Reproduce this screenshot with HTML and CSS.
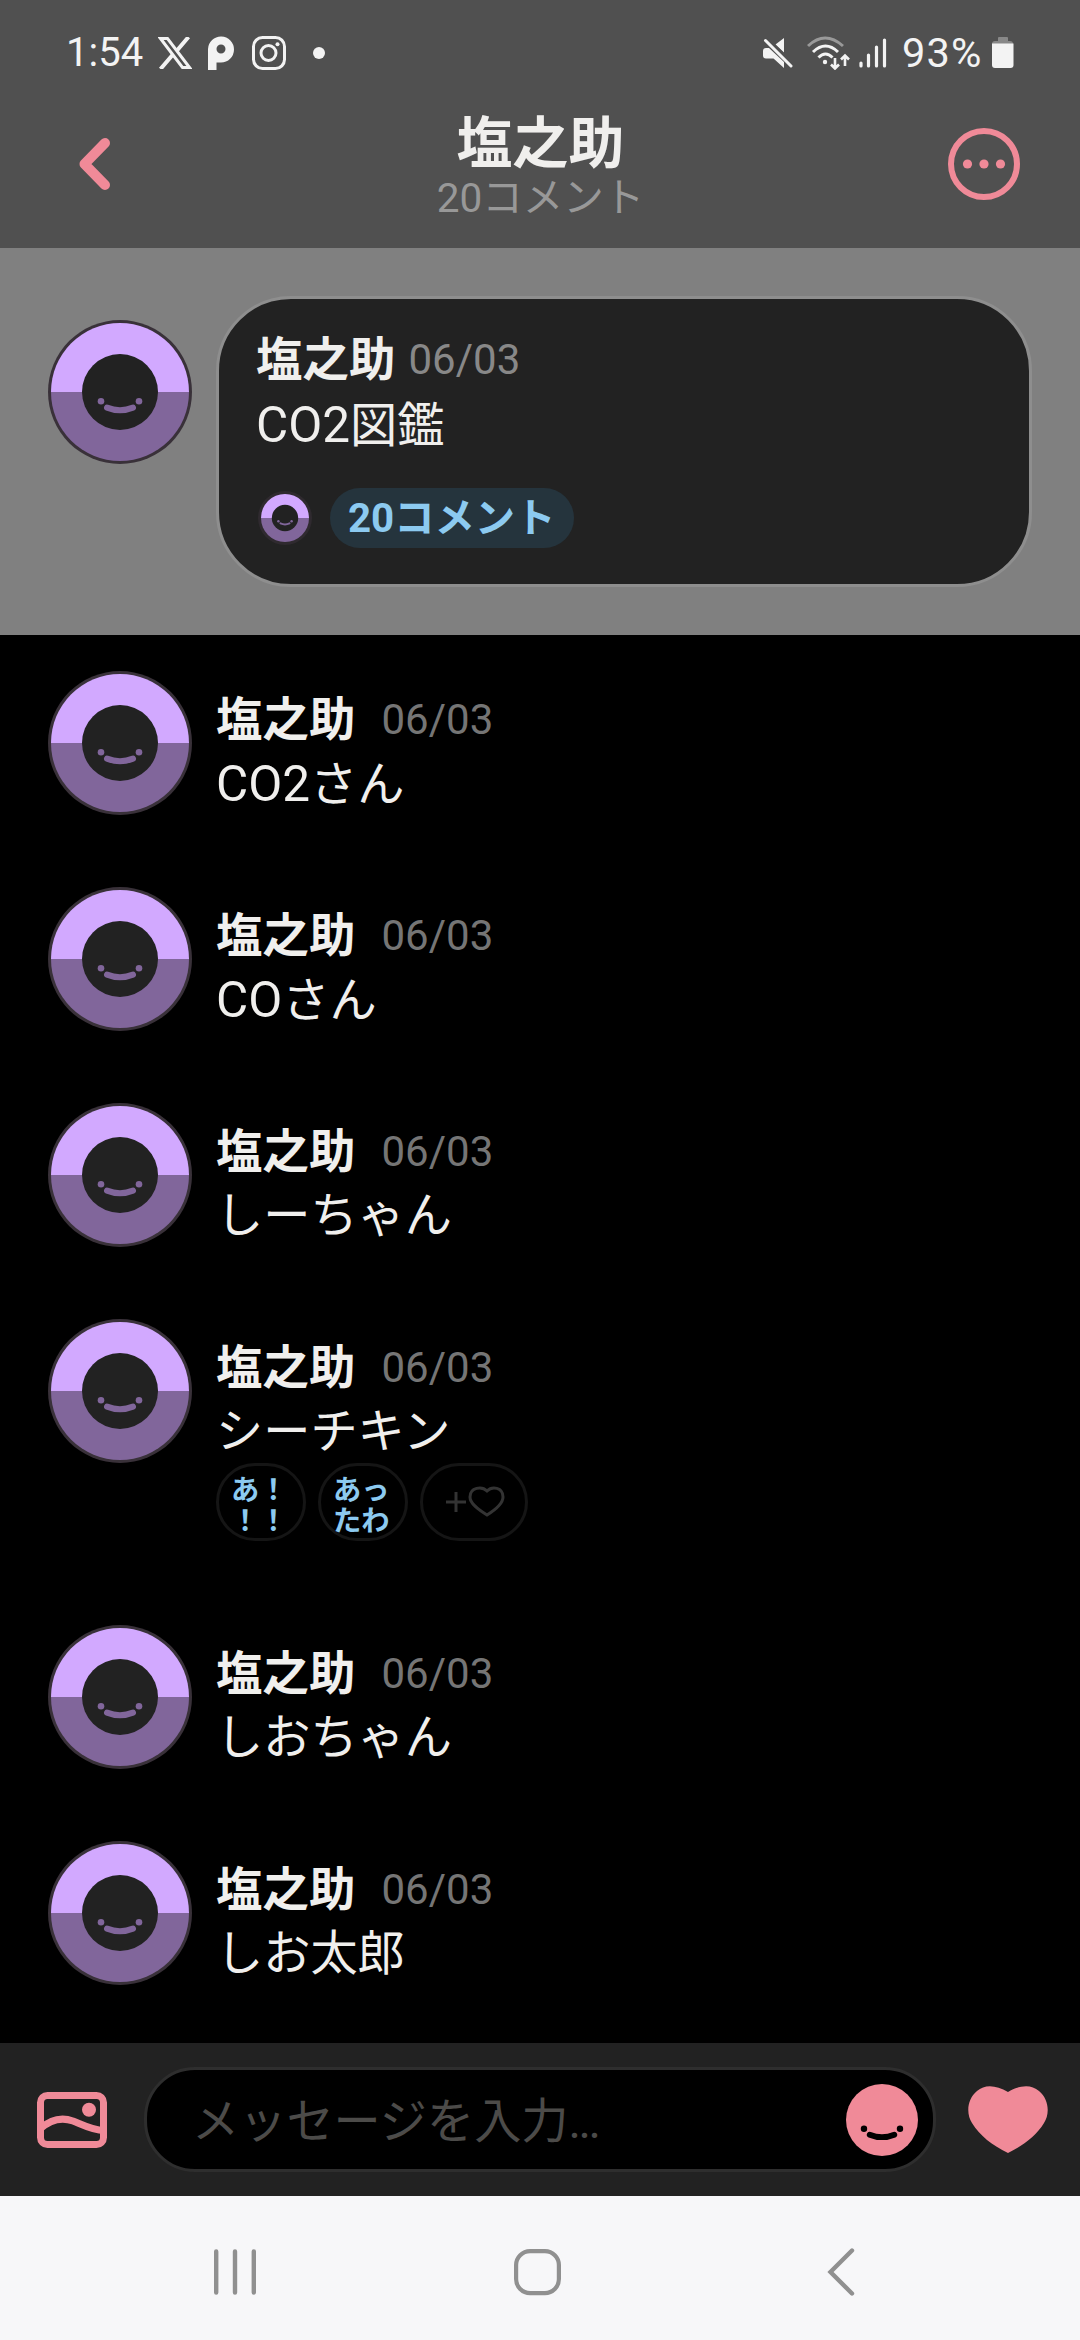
FILE: index.html
```html
<!DOCTYPE html>
<html lang="ja">
<head>
<meta charset="utf-8">
<title>塩之助</title>
<link rel="stylesheet" href="styles.css">
</head>
<body>
<svg class="defs" width="0" height="0">
  <symbol id="avatar" viewBox="0 0 144 144">
    <circle cx="72" cy="72" r="72" fill="#393139"/>
    <path d="M3 72a69 69 0 0 1 138 0z" fill="#d2a9ff"/>
    <path d="M3 72a69 69 0 0 0 138 0z" fill="#81669b"/>
    <circle cx="72" cy="72" r="38" fill="#222"/>
    <circle cx="53" cy="81.3" r="3.3" fill="#81669b"/>
    <circle cx="91" cy="81.3" r="3.3" fill="#81669b"/>
    <path d="M59 87.600Q72 92.800 85 87.600" fill="none" stroke="#81669b" stroke-width="6" stroke-linecap="round"/>
  </symbol>
  <symbol id="avatar-mini" viewBox="0 0 54 54">
    <circle cx="27" cy="27" r="27" fill="#2f2a2f"/>
    <path d="M3 27a24 24 0 0 1 48 0z" fill="#d2a9ff"/>
    <path d="M3 27a24 24 0 0 0 48 0z" fill="#81669b"/>
    <circle cx="27" cy="27" r="13.200" fill="#222"/>
    <circle cx="20.400" cy="30.200" r="1.200" fill="#81669b"/>
    <circle cx="33.600" cy="30.200" r="1.200" fill="#81669b"/>
    <path d="M22.500 32.400Q27 34.400 31.500 32.400" fill="none" stroke="#81669b" stroke-width="2" stroke-linecap="round"/>
  </symbol>
</svg>
<div class="screen">
  <header class="top">
    <div class="status">
      <div class="status-left">
        <span class="clock">1:54</span>
        <svg class="ic-x" width="34" height="32" viewBox="0 0 34 32"><path d="M2.500 1.500h7L31.500 30.500h-7z" fill="none" stroke="#f3f3f3" stroke-width="3"/><path d="M30.500 0 19 13.500M14.500 18 2.500 32" stroke="#f3f3f3" stroke-width="4"/></svg>
        <svg class="ic-p" width="26" height="34" viewBox="0 0 26 34"><path fill="#f3f3f3" fill-rule="evenodd" d="M0 34V13a13 13 0 1 1 13 13.500H8.500V34zM13 8.500a4.500 4.500 0 1 0 0 9A4.500 4.500 0 0 0 13 8.500z"/></svg>
        <svg class="ic-ig" width="34" height="34" viewBox="0 0 34 34" fill="none" stroke="#f3f3f3" stroke-width="3"><rect x="1.500" y="1.500" width="31" height="31" rx="9"/><circle cx="16.500" cy="17" r="7.500"/><circle cx="25.500" cy="8.300" r="2" fill="#f3f3f3" stroke="none"/></svg>
        <i class="more-dot"></i>
      </div>
      <div class="status-right">
        <svg class="ic-mute" width="30" height="30" viewBox="0 0 30 30" fill="#f3f3f3"><path d="M21 0v14.500L12.500 6.500zM0 13q0-3 3-3h3L21 24v6L10.500 20.500H3q-3 0-3-3z"/><path d="M5 .5 29 24.500" stroke="#505050" stroke-width="2"/><path d="M2.500 2.500 28 28" stroke="#f3f3f3" stroke-width="3" stroke-linecap="round"/></svg>
        <svg class="ic-wifi" width="44" height="34" viewBox="0 0 44 34" fill="none" stroke="#f3f3f3" stroke-width="3"><path d="M1 10q17-16 35 0" stroke="#999"/><path d="M6 16q12.500-12 25 0M11.500 21.500q7-7 14 0"/><circle cx="18" cy="26" r="2.200" fill="#f3f3f3" stroke="none"/><path d="M28 22v10M24 28.500l4 4 4-4M38 30V20M34 23.500l4-4 4 4" stroke-width="2.600"/></svg>
        <svg class="ic-signal" width="28" height="30" viewBox="0 0 28 30" stroke="#f3f3f3" stroke-width="3.200" stroke-linecap="round"><path d="M2 25v3M9.500 17v11M17.500 9v19M25.500 2v26"/></svg>
        <span class="percent">93%</span>
        <svg class="ic-batt" width="22" height="32" viewBox="0 0 22 32"><path d="M6 4V1q0-1 1-1h8q1 0 1 1v3h2q3 0 3 3H0q0-3 3-3z" fill="#888"/><path d="M0 6.500h21.500V28q0 3-3 3H3q-3 0-3-3z" fill="#f3f3f3"/></svg>
      </div>
    </div>
    <div class="titlebar">
      <svg class="back" width="32" height="54" viewBox="0 0 32 54"><path d="M26 6 5.500 27 26 48" fill="none" stroke="#f08a98" stroke-width="10" stroke-linecap="round" stroke-linejoin="round"/></svg>
      <div class="titles">
        <h1>塩之助</h1>
        <p>20コメント</p>
      </div>
      <svg class="menu" width="72" height="72" viewBox="0 0 72 72" fill="#f08a98"><circle cx="36" cy="36" r="33" fill="none" stroke="#f08a98" stroke-width="6"/><circle cx="19.500" cy="36" r="4.600"/><circle cx="36" cy="36" r="4.600"/><circle cx="52.500" cy="36" r="4.600"/></svg>
    </div>
  </header>

  <section class="post">
    <svg class="avatar"><use href="#avatar"/></svg>
    <article class="card">
      <div class="meta"><b>塩之助</b><time>06/03</time></div>
      <p class="body"><span class="latin">CO2</span>図鑑</p>
      <div class="count">
        <svg class="mini"><use href="#avatar-mini"/></svg>
        <span class="pill">20コメント</span>
      </div>
    </article>
  </section>

  <main class="list">
    <div class="row"><svg class="avatar"><use href="#avatar"/></svg><div class="text"><div class="meta"><b>塩之助</b><time>06/03</time></div><p class="body"><span class="latin">CO2</span>さん</p></div></div>
    <div class="row"><svg class="avatar"><use href="#avatar"/></svg><div class="text"><div class="meta"><b>塩之助</b><time>06/03</time></div><p class="body"><span class="latin">CO</span>さん</p></div></div>
    <div class="row"><svg class="avatar"><use href="#avatar"/></svg><div class="text"><div class="meta"><b>塩之助</b><time>06/03</time></div><p class="body">しーちゃん</p></div></div>
    <div class="row reacted"><svg class="avatar"><use href="#avatar"/></svg><div class="text"><div class="meta"><b>塩之助</b><time>06/03</time></div><p class="body">シーチキン</p>
      <div class="reactions">
        <span class="react">あ！<br>！！</span>
        <span class="react">あっ<br>たわ</span>
        <span class="react add"><svg width="60" height="32" viewBox="0 0 60 32" fill="none" stroke="#333" stroke-width="3"><path d="M0 17h20M10 7v20M41 6C36 1 24 2 24 12c0 7 9 13 17 18 8-5 16-11 16-18C57 2 46 1 41 6z"/></svg></span>
      </div></div></div>
    <div class="row"><svg class="avatar"><use href="#avatar"/></svg><div class="text"><div class="meta"><b>塩之助</b><time>06/03</time></div><p class="body">しおちゃん</p></div></div>
    <div class="row"><svg class="avatar"><use href="#avatar"/></svg><div class="text"><div class="meta"><b>塩之助</b><time>06/03</time></div><p class="body">しお太郎</p></div></div>
  </main>

  <footer class="composer">
    <svg class="gallery" width="70" height="56" viewBox="0 0 70 56" fill="none" stroke="#f08a98" stroke-width="7"><rect x="3.500" y="3.500" width="63" height="49" rx="7"/><path d="M3 37C14 27 26 25.500 36 29 47 33.500 56 38.500 67 38.500"/><circle cx="52" cy="17.700" r="7" fill="#f08a98" stroke="none"/></svg>
    <div class="input">
      <span class="placeholder">メッセージを入力<span class="dots">...</span></span>
      <svg width="72" height="72" viewBox="0 0 72 72"><circle cx="36" cy="36" r="36" fill="#f08a98"/><circle cx="18" cy="44.700" r="3.200"/><circle cx="54" cy="44.700" r="3.200"/><path d="M23.700 50.700Q36 55.700 48.300 50.700" fill="none" stroke="#000" stroke-width="5.800" stroke-linecap="round"/></svg>
    </div>
    <svg class="heart" width="80" height="67" viewBox="0 0 80 67"><path fill="#f08a98" d="M40 6C28-1 17-2 9 5-1 13-2 28 4 37c8 13 20 22 36 30 16-8 28-17 36-30 6-9 5-24-5-32C63-2 52-1 40 6z"/></svg>
  </footer>

  <nav class="nav">
    <svg width="42" height="48" viewBox="0 0 42 48" stroke="#909090" stroke-width="4.400" stroke-linecap="round"><path d="M2.200 3.500v41M21 3.500v41M39.800 3.500v41"/></svg>
    <svg class="home" width="47" height="48" viewBox="0 0 47 48" fill="none" stroke="#909090" stroke-width="4.200"><rect x="2.100" y="3.100" width="42.800" height="42" rx="14"/></svg>
    <svg class="nav-back" width="28" height="50" viewBox="0 0 28 50" fill="none" stroke="#909090" stroke-width="4.400" stroke-linecap="round"><path d="M25 3.500 3.500 25 25 46.500"/></svg>
  </nav>
</div>
</body>
</html>
```

FILE: styles.css
```css
* { box-sizing: border-box; margin: 0; padding: 0; }
body { background: #000; font-family: Roboto, "Noto Sans CJK JP", sans-serif; color: #f0efed; }
svg { display: block; flex: none; }
.defs { position: absolute; }
.screen { width: 1080px; height: 2340px; display: flex; flex-direction: column; overflow: hidden; }

.top { height: 248px; background: #505050; flex: none; }
.status { height: 104px; display: flex; justify-content: space-between; align-items: center; padding: 1px 66px 0 66px; color: #f3f3f3; font-size: 40px; line-height: 48px; }
.status-left, .status-right { display: flex; align-items: center; }
.clock { width: 75px; }
.ic-x { margin-left: 17px; }
.ic-p { margin-left: 16px; }
.ic-ig { margin-left: 18px; }
.more-dot { width: 12px; height: 12px; border-radius: 50%; background: #f3f3f3; margin-left: 27px; }
.ic-wifi { margin-left: 14px; }
.ic-signal { margin-left: 8px; }
.percent { margin-left: 15px; width: 84px; font-size: 41.500px; letter-spacing: 1.200px; }
.ic-batt { margin-left: 6px; }
.titlebar { height: 120px; display: flex; justify-content: space-between; align-items: center; padding: 0 60px 0 79px; }
.titles { text-align: center; padding: 8px 0 0 22px; }
.titles h1 { font-size: 56px; line-height: 60px; font-weight: 700; }
.titles p { font-size: 40.500px; line-height: 48px; color: #989898; }

.post { height: 387px; flex: none; background: #808080; padding: 48px 48px 0; display: flex; gap: 24px; }
.avatar { width: 144px; height: 144px; }
.post .avatar { margin-top: 24px; }
.card { flex: 1; height: 291px; border: 3px solid #8e8e8e; border-radius: 75px; background: #222; padding: 31px 37px 0; }
.meta { display: flex; height: 60px; line-height: 60px; }
.meta b { font-size: 46.500px; font-weight: 700; }
.meta time { font-size: 42px; color: #888; margin-left: 13px; }
.body { font-size: 47.200px; height: 66px; line-height: 66px; }
.card .body { margin-top: 2px; }
.latin { font-size: 49.500px; }
.count { display: flex; align-items: center; gap: 18px; margin-top: 30px; padding-left: 2px; }
.mini { width: 54px; height: 54px; }
.pill { width: 244px; height: 60px; line-height: 62px; border-radius: 30px; background: #25343d; color: #8ccaf0; font-weight: 700; font-size: 40.300px; padding-left: 18px; }

.list { flex: 1; min-height: 0; overflow: hidden; padding: 36px 48px 0; }
.row { display: flex; gap: 24px; height: 216px; }
.row.reacted { height: 306px; }
.row .text { padding-top: 19px; }
.row .body { padding-top: 1px; height: 65px; }
.row .meta time { color: #757575; margin-left: 26px; }
.reactions { display: flex; gap: 12px; }
.react { width: 90px; height: 78px; border: 3px solid #151515; border-radius: 39px; padding: 9px 0 0 12px; font-size: 28.300px; line-height: 31px; font-weight: 700; color: #8ccaf0; }
.react.add { width: 108px; padding: 19px 0 0 23px; }

.composer { height: 153px; flex: none; background: #222; display: flex; align-items: center; padding: 0 32px 0 37px; }
.gallery { margin-right: 37px; }
.input { width: 792px; height: 105px; border: 3px solid #2e2e2e; border-radius: 51px; background: #000; display: flex; align-items: center; justify-content: space-between; padding: 0 15px 0 45px; color: #4c4b49; font-size: 47.200px; }
.placeholder { padding-bottom: 4px; }
.dots { letter-spacing: -2.500px; }
.heart { margin-left: 32px; }

.nav { height: 144px; flex: none; background: #f7f7f9; display: flex; align-items: center; padding: 8px 0 0 214px; }
.home { margin-left: 258px; }
.nav-back { margin-left: 266px; }
```
